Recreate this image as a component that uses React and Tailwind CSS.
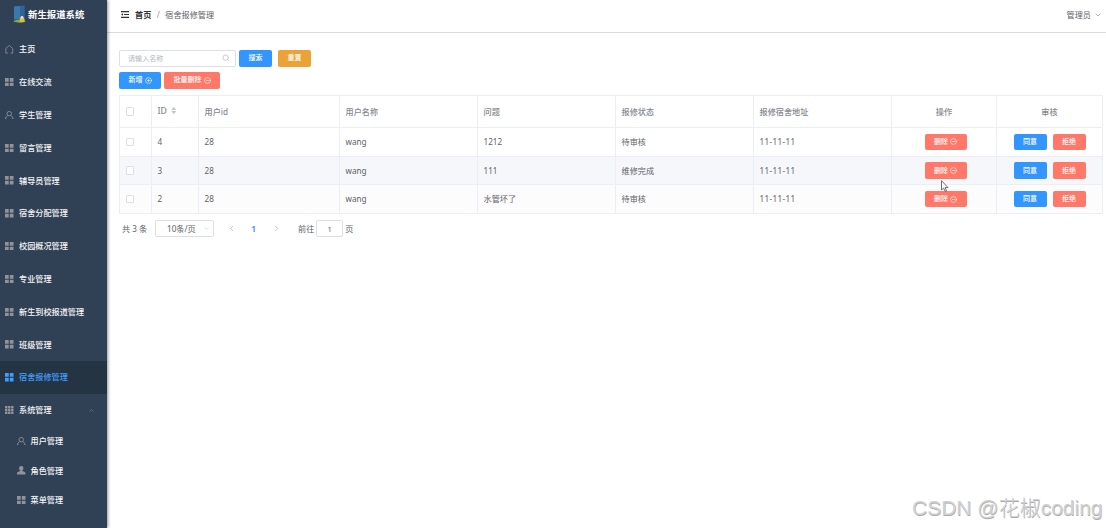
import { ChevronDown, ChevronLeft, ChevronRight, ChevronUp, CircleMinus, CirclePlus, Search } from "lucide-react";

// # Icons #
const GridIcon = ({ className }) => (
    <svg viewBox="0 0 16 16" className={className} fill="currentColor">
        <path d="M0 0h7v7H0zM9 0h7v7H9zM0 9h7v7H0zM9 9h7v7H9z" />
    </svg>
);

const TableIcon = ({ className }) => (
    <svg viewBox="0 0 16 16" className={className} fill="currentColor">
        <path d="M0 0h4.600v4.600H0zM5.700 0h4.600v4.600H5.700zM11.400 0H16v4.600h-4.600zM0 5.700h4.600v4.600H0zM5.700 5.700h4.600v4.600H5.700zM11.400 5.700H16v4.600h-4.600zM0 11.400h4.600V16H0zM5.700 11.400h4.600V16H5.700zM11.400 11.400H16V16h-4.600z" />
    </svg>
);

const HomeIcon = ({ className }) => (
    <svg viewBox="0 0 16 16" className={className} fill="none" stroke="currentColor" strokeWidth="1.5">
        <path d="M5.500 15.200h-4V6.500L8 1l6.500 5.500v8.700h-4" />
    </svg>
);

const UserIcon = ({ className }) => (
    <svg viewBox="0 0 16 16" className={className} fill="none" stroke="currentColor" strokeWidth="1.6">
        <circle cx="8" cy="5" r="4.200" />
        <path d="M3.500 15.200h-2.700c0-3 1.500-5 4.200-6.500M12.500 15.200h2.700c0-3-1.500-5-4.200-6.500" />
    </svg>
);

const UserSolidIcon = ({ className }) => (
    <svg viewBox="0 0 16 16" className={className} fill="currentColor">
        <path d="M8 0c2.500 0 4 1.700 4 4.200 0 2-1 3.600-2 4.400v1l4.500 1.800c1 .4 1.500 1 1.500 2.100V16H0v-2.500c0-1.100.5-1.700 1.500-2.100L6 9.600v-1C5 7.800 4 6.200 4 4.200 4 1.700 5.500 0 8 0z" />
    </svg>
);

const FoldIcon = ({ className }) => (
    <svg viewBox="0 0 16 14" className={className} fill="currentColor">
        <path d="M0 0h16v2.400H0zM6 5.800h10v2.400H6zM0 11.600h16V14H0zM0 7l4-2.600v5.200z" />
    </svg>
);

const LogoIcon = () => (
    <svg viewBox="0 0 13 18" className="h-[18px] w-[13px]">
        <path d="M1 1.500L11.700.5v16H1z" fill="#2b659b" />
        <path d="M1 1.500L7 1v13H1z" fill="#3b78ab" />
        <path d="M0 16.500l4-1.500 8 .5.500 1.500-6 .8z" fill="#8fb52e" />
        <circle cx="9" cy="14.700" r="2.500" fill="#e5b84d" />
        <circle cx="9" cy="12.300" r="1.400" fill="#f6dfa2" />
    </svg>
);

const menus = [
    { name: "主页", icon: HomeIcon },
    { name: "在线交流", icon: GridIcon },
    { name: "学生管理", icon: UserIcon },
    { name: "留言管理", icon: GridIcon },
    { name: "辅导员管理", icon: GridIcon },
    { name: "宿舍分配管理", icon: GridIcon },
    { name: "校园概况管理", icon: GridIcon },
    { name: "专业管理", icon: GridIcon },
    { name: "新生到校报道管理", icon: GridIcon },
    { name: "班级管理", icon: GridIcon },
    { name: "宿舍报修管理", icon: GridIcon, active: true },
    { name: "系统管理", icon: TableIcon, open: true },
];

const subMenus = [
    { name: "用户管理", icon: UserIcon },
    { name: "角色管理", icon: UserSolidIcon },
    { name: "菜单管理", icon: GridIcon },
];

const rows = [
    { id: 4, userId: 28, name: "wang", problem: "1212", status: "待审核", address: "11-11-11" },
    { id: 3, userId: 28, name: "wang", problem: "111", status: "维修完成", address: "11-11-11" },
    { id: 2, userId: 28, name: "wang", problem: "水管坏了", status: "待审核", address: "11-11-11" },
];

const rowColors = ["bg-white", "bg-[#f5f7fa]", "bg-[#fcfcfc]"];

// # 'Sidebar' Component #
const Sidebar = () => {
    return (
        <aside className="relative z-10 w-[107px] shrink-0 bg-[#304156] text-[#f4f4f5] font-medium shadow-[1px_0_3px_rgba(0,21,41,0.45)]">
            <div className="flex h-[33px] items-center gap-[2px] pb-[5px] pl-[13px]">
                <LogoIcon />
                <h1 className="pt-[2px] text-[9.400px] font-bold whitespace-nowrap text-white">新生报道系统</h1>
            </div>
            {menus.map((item) => (
                <div
                    key={item.name}
                    className={`flex h-[32.800px] items-center pl-[5px] ${item.active ? "bg-[#243443] text-[#409eff]" : ""}`}
                >
                    <item.icon className={`mr-[5.500px] size-[8.500px] ${item.active ? "" : "text-[#909399]"}`} />
                    <span>{item.name}</span>
                    {item.open && <ChevronUp className="mr-[12px] ml-auto size-[7px] text-[#7f8a98]" strokeWidth={2} />}
                </div>
            ))}
            {subMenus.map((item) => (
                <div key={item.name} className="flex h-[29.300px] items-center pl-[17px]">
                    <item.icon className="mr-[5px] size-[8.500px] text-[#909399]" />
                    <span>{item.name}</span>
                </div>
            ))}
        </aside>
    );
};

// # 'Button' Component #
const Button = ({ color, className = "", children }) => (
    <button
        className={`flex h-[16.500px] items-center justify-center gap-[2px] rounded-[2px] text-[7px] font-medium text-white ${color} ${className}`}
    >
        {children}
    </button>
);

const Checkbox = () => <span className="block size-[8.500px] rounded-[1px] border border-[#dcdfe6] bg-white" />;

const Th = ({ center, children }) => (
    <th className={`border-r border-b border-[#ebeef5] py-0 pr-0 font-medium text-[#85888e] ${center ? "pl-0 text-center" : "pl-[5.500px] text-left"}`}>
        {children}
    </th>
);

const Td = ({ center, children }) => (
    <td className={`border-r border-b border-[#ebeef5] py-0 pr-0 ${center ? "pl-0" : "pl-[5.500px]"}`}>{children}</td>
);

// # 'RepairTable' Component #
const RepairTable = () => {
    return (
        <table className="mt-[6px] w-[984px] table-fixed border-separate border-spacing-0 border-t border-l border-[#ebeef5] text-[#606266]">
            <colgroup>
                <col className="w-[32px]" />
                <col className="w-[47px]" />
                <col className="w-[141px]" />
                <col className="w-[138px]" />
                <col className="w-[138px]" />
                <col className="w-[138px]" />
                <col className="w-[138px]" />
                <col className="w-[105px]" />
                <col className="w-[106px]" />
            </colgroup>
            <thead>
                <tr className="h-[32px]">
                    <Th><Checkbox /></Th>
                    <Th>
                        <span className="flex items-center gap-[4px] pb-[2px] text-[8.600px]">
                            ID
                            <svg viewBox="0 0 6 8" className="h-[7px] w-[5.500px]" fill="#c0c4cc">
                                <path d="M3 0l3 3.300H0zM3 8L0 4.700h6z" />
                            </svg>
                        </span>
                    </Th>
                    <Th>用户id</Th>
                    <Th>用户名称</Th>
                    <Th>问题</Th>
                    <Th>报修状态</Th>
                    <Th>报修宿舍地址</Th>
                    <Th center>操作</Th>
                    <Th center>审核</Th>
                </tr>
            </thead>
            <tbody>
                {rows.map((row, i) => (
                    <tr key={row.id} className={`h-[28.700px] ${rowColors[i]}`}>
                        <Td><Checkbox /></Td>
                        <Td>{row.id}</Td>
                        <Td>{row.userId}</Td>
                        <Td>{row.name}</Td>
                        <Td>{row.problem}</Td>
                        <Td>{row.status}</Td>
                        <Td><span className="tracking-[0.350px]">{row.address}</span></Td>
                        <Td center>
                            <div className="flex justify-center pl-[3px]">
                                <Button color="bg-[#ff7869]" className="w-[42px]">
                                    删除 <CircleMinus className="size-[7px]" strokeWidth={2} />
                                </Button>
                            </div>
                        </Td>
                        <Td center>
                            <div className="flex justify-center gap-[6px]">
                                <Button color="bg-[#3396ff]" className="w-[33px]">同意</Button>
                                <Button color="bg-[#ff7869]" className="w-[33px]">拒绝</Button>
                            </div>
                        </Td>
                    </tr>
                ))}
            </tbody>
        </table>
    );
};

// # 'Pagination' Component #
const Pagination = () => {
    return (
        <div className="mt-[6px] flex h-[17px] items-center text-[#606266]">
            <span className="ml-[3px] w-[33px]">共 3 条</span>
            <div className="flex h-[17px] w-[59px] items-center rounded-[2px] border border-[#dcdfe6] pr-[3px] pl-[11px]">
                10条/页
                <ChevronDown className="ml-auto size-[7px] text-[#c0c4cc]" />
            </div>
            <ChevronLeft className="ml-[13px] size-[9px] text-[#a8abb2]" />
            <span className="ml-[14px] w-[7px] text-center font-bold text-[#409eff]">1</span>
            <ChevronRight className="ml-[15px] size-[9px] text-[#a8abb2]" />
            <span className="ml-[17px]">前往</span>
            <span className="mx-[2px] flex h-[17px] w-[27px] items-center justify-center rounded-[2px] border border-[#dcdfe6] text-[7.500px]">1</span>
            <span>页</span>
        </div>
    );
};

const App = () => {
    return (
        <div className="relative flex h-[528px] w-[1106px] overflow-hidden bg-white font-['Noto_Sans','Noto_Sans_CJK_SC',sans-serif] text-[8.150px] leading-[12px]">
            <Sidebar />

            <main className="min-w-0 flex-1">
                {/* # Header # */}
                <header className="flex h-[33px] items-center border-b border-[#d8dbe0] pr-[4px] pb-[3px] pl-[14px] text-[#606266]">
                    <FoldIcon className="mr-[6px] h-[7px] w-[8px] text-[#303133]" />
                    <span className="font-bold text-[#303133]">首页</span>
                    <span className="mx-[5.500px] text-[#909399]">/</span>
                    <span>宿舍报修管理</span>
                    <span className="ml-auto">管理员</span>
                    <ChevronDown className="ml-[3px] size-[8px] text-[#909399]" />
                </header>

                <div className="pt-[17px] pl-[12px]">
                    {/* # Search Bar # */}
                    <div className="flex">
                        <div className="flex h-[17px] w-[117px] items-center rounded-[2px] border border-[#dcdfe6] pr-[5px] pb-px pl-[8px] text-[7.100px] text-[#b4b7be]">
                            请输入名称
                            <Search className="ml-auto size-[8px]" />
                        </div>
                        <Button color="bg-[#3396ff]" className="ml-[3px] w-[33px]">搜索</Button>
                        <Button color="bg-[#eba337]" className="ml-[6px] w-[33px]">重置</Button>
                    </div>

                    {/* # Actions # */}
                    <div className="mt-[5px] flex h-[17px] gap-[3px]">
                        <Button color="bg-[#3396ff]" className="w-[42px]">
                            新增 <CirclePlus className="size-[7px]" />
                        </Button>
                        <Button color="bg-[#ff7869]" className="w-[56px]">
                            批量删除 <CircleMinus className="size-[7px]" />
                        </Button>
                    </div>

                    <RepairTable />
                    <Pagination />
                </div>
            </main>

            {/* # Mouse Pointer # */}
            <svg viewBox="0 0 8 12" className="absolute top-[180px] left-[941px] z-20 h-[12px] w-[8px]">
                <path d="M.5.700v9.300l2.100-1.900 1.500 3.200 1.400-.6-1.400-3.100h2.900z" fill="#fff" stroke="#4b4d55" strokeWidth=".8" />
            </svg>

            {/* # Watermark # */}
            <div className="absolute top-[496px] left-[912px] font-['Liberation_Sans','Noto_Sans_CJK_SC',sans-serif] text-[21px] leading-[24px] font-light whitespace-nowrap text-[#d2d2d2] [text-shadow:0.5px_0.5px_0_#aaa]">
                CSDN @花椒coding
            </div>
        </div>
    );
};

export default App;
